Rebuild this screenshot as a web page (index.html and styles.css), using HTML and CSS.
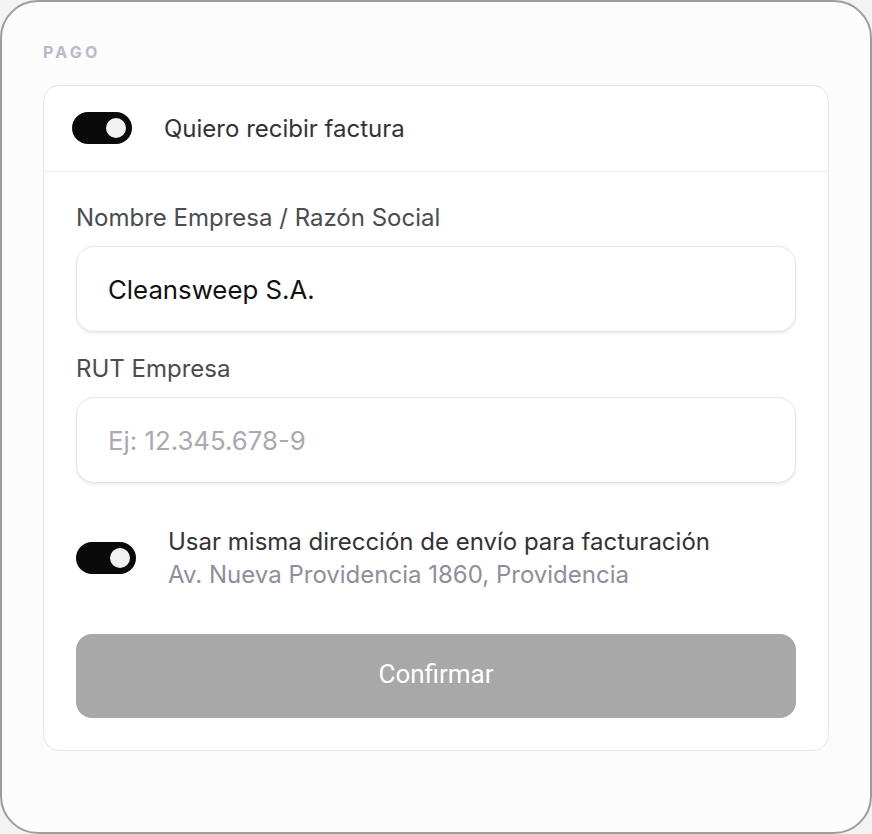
FILE: index.html
```html
<!DOCTYPE html>
<html lang="es">
<head>
  <meta charset="UTF-8">
  <title>Pago</title>
  <link rel="stylesheet" href="styles.css">
</head>
<body>
  <div class="frame">
    <div class="section-title">PAGO</div>

    <div class="card">
      <div class="card-head">
        <span class="toggle on"><span class="knob"></span></span>
        <span class="head-label">Quiero recibir factura</span>
      </div>

      <div class="card-body">
        <label class="field-label" for="empresa">Nombre Empresa / Razón Social</label>
        <input class="field" id="empresa" type="text" value="Cleansweep S.A.">

        <label class="field-label second" for="rut">RUT Empresa</label>
        <input class="field" id="rut" type="text" placeholder="Ej: 12.345.678-9">

        <div class="same-address">
          <span class="toggle on"><span class="knob"></span></span>
          <div class="address-text">
            <div class="address-title">Usar misma dirección de envío para facturación</div>
            <div class="address-sub">Av. Nueva Providencia 1860, Providencia</div>
          </div>
        </div>

        <button class="confirm" disabled>Confirmar</button>
      </div>
    </div>
  </div>
</body>
</html>
```

FILE: styles.css
```css
html, body {
  margin: 0;
  background: #f3f3f3;
}
body {
  font-family: Inter, "Noto Sans", Arial, sans-serif;
  color: #333338;
}
.frame {
  box-sizing: border-box;
  width: 872px;
  height: 834px;
  border: 2px solid #9d9d9d;
  border-radius: 38px;
  background: #fcfcfc;
  padding: 40px 41px 0;
}
.section-title {
  font-size: 16px;
  font-weight: 700;
  letter-spacing: 3.2px;
  color: #b9b9cb;
  line-height: 20px;
  margin-bottom: 23px;
}

.card {
  background: #fff;
  border: 1px solid #e6e6e6;
  border-radius: 16px;
}
.card-head {
  display: flex;
  align-items: center;
  gap: 32px;
  height: 84px;
  padding-left: 28px;
  padding-bottom: 1px;
  box-sizing: content-box;
  border-bottom: 1px solid #ececec;
}
.head-label {
  font-size: 24px;
  color: #333338;
}

.toggle {
  display: inline-flex;
  align-items: center;
  justify-content: flex-end;
  box-sizing: border-box;
  width: 60px;
  height: 32px;
  padding: 0 6px;
  border-radius: 16px;
  background: #0a0a0a;
  flex-shrink: 0;
}
.knob {
  width: 20px;
  height: 20px;
  border-radius: 50%;
  background: #f1f1f1;
}

.card-body {
  display: flex;
  flex-direction: column;
  padding: 32px 32px 32px;
}
.field-label {
  font-size: 24px;
  line-height: 28px;
  color: #4b4b52;
  margin-bottom: 14px;
}
.field-label.second {
  margin-top: 23px;
}
.field {
  box-sizing: border-box;
  height: 86px;
  width: 100%;
  padding: 0 31px;
  border: 1px solid #e4e4e4;
  border-radius: 18px;
  background: #fff;
  box-shadow: 0 2px 3px rgba(0, 0, 0, 0.07);
  font-family: Inter, "Noto Sans", Arial, sans-serif;
  font-size: 25.8px;
  color: #111;
  outline: none;
}
.field::placeholder {
  color: #a9a9b1;
}

.same-address {
  display: flex;
  align-items: center;
  gap: 32px;
  margin-top: 42px;
}
.address-title {
  font-size: 24px;
  line-height: 33px;
  color: #333338;
}
.address-sub {
  font-size: 24px;
  line-height: 33px;
  color: #8e8e9d;
}

.confirm {
  margin-top: 43px;
  height: 84px;
  padding-bottom: 5px;
  border: none;
  border-radius: 16px;
  background: #a8a8a8;
  color: #fff;
  font-family: Roboto, Arial, sans-serif;
  font-size: 26px;
}
```
